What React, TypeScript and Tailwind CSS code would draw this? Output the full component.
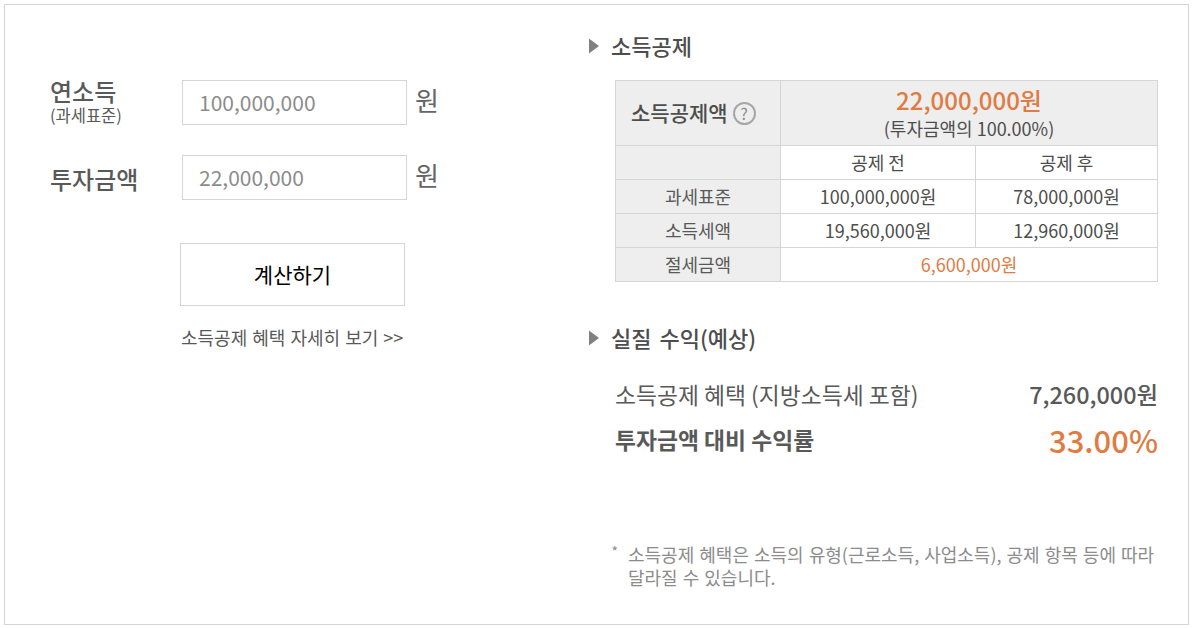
const krFont = "font-['Noto_Sans_CJK_KR',sans-serif]";

function SectionTitle({ label }: { label: string }) {
  return (
    <div className="flex items-center h-6">
      <svg width="10" height="16" viewBox="0 0 10 16" className="mr-[12px]">
        <path d="M0 0.5 L10 8 L0 15.5 Z" fill="#808080" />
      </svg>
      <h2 className="text-[22px] leading-6 -mt-[3px] font-medium text-[#4d4d4d] [word-spacing:3px]">{label}</h2>
    </div>
  );
}

function AmountField({ value }: { value: string }) {
  return (
    <div className="flex items-center">
      <div className="w-[225px] h-[45px] border border-[#d5d5d5] pl-[16px] flex items-center text-[21px] text-[#8c8c8c]">
        {value}
      </div>
      <span className="ml-[8px] -mt-[6px] text-[26px] text-[#666666]">원</span>
    </div>
  );
}

function TableRow({ label, before, after }: { label: string; before: string; after: string }) {
  return (
    <div className="flex h-[34px] border-b border-[#d5d5d5]">
      <div className="w-[165px] bg-[#eeeeee] border-r border-[#d5d5d5] flex items-center justify-center text-[#595959]">
        {label}
      </div>
      <div className="w-[195px] border-r border-[#d5d5d5] flex items-center justify-center">{before}</div>
      <div className="flex-1 flex items-center justify-center">{after}</div>
    </div>
  );
}

export default function App() {
  return (
    <div className={`${krFont} w-[1193px] h-[628px] bg-white pt-[4px] pl-[4px]`}>
      <div className="w-[1185px] h-[621px] border border-[#d5d5d5] flex">
        <div className="w-[584px] shrink-0 pl-[45px] pt-[75px]">
          <div className="flex items-center text-[#595959]">
            <div className="w-[132px] flex flex-col">
              <span className="text-[24px] leading-[24px] font-medium -mt-[2px]">연소득</span>
              <span className="text-[16.5px] leading-[20px] mt-[2px]">(과세표준)</span>
            </div>
            <AmountField value="100,000,000" />
          </div>
          <div className="flex items-center mt-[30px] text-[#595959]">
            <div className="w-[132px] text-[24px] leading-[26px] font-medium mt-[2px]">투자금액</div>
            <AmountField value="22,000,000" />
          </div>
          <button className="block mt-[43px] ml-[130px] w-[225px] h-[63px] border border-[#d5d5d5] text-[21px] text-black">
            계산하기
          </button>
          <p className="mt-[19px] ml-[131px] text-[18px] leading-6 text-[#595959] [word-spacing:1px]">소득공제 혜택 자세히 보기 &gt;&gt;</p>
        </div>

        <div className="flex-1 pt-[29px]">
          <SectionTitle label="소득공제" />
          <div className="ml-[26px] mt-[22px] w-[543px] border-x border-t border-[#d5d5d5] text-[18px] text-[#4d4d4d]">
            <div className="flex h-[65px] border-b border-[#d5d5d5] bg-[#eeeeee]">
              <div className="w-[165px] border-r border-[#d5d5d5] pl-[15px] flex items-center gap-[5px] text-[21px] font-medium">
                소득공제액
                <span className="w-[23px] h-[23px] rounded-full border-2 border-[#a6a6a6] flex items-center justify-center text-[16px] font-normal text-[#8c8c8c]">
                  ?
                </span>
              </div>
              <div className="flex-1 flex flex-col items-center justify-center">
                <span className="text-[24px] leading-[30px] -mt-[2px] font-medium text-[#e07b42]">22,000,000원</span>
                <span className="text-[18px] leading-[24px] mt-[1px]">(투자금액의 100.00%)</span>
              </div>
            </div>
            <TableRow label="" before="공제 전" after="공제 후" />
            <TableRow label="과세표준" before="100,000,000원" after="78,000,000원" />
            <TableRow label="소득세액" before="19,560,000원" after="12,960,000원" />
            <div className="flex h-[34px] border-b border-[#d5d5d5]">
              <div className="w-[165px] bg-[#eeeeee] border-r border-[#d5d5d5] flex items-center justify-center text-[#595959]">
                절세금액
              </div>
              <div className="flex-1 flex items-center justify-center text-[#dd7c45]">6,600,000원</div>
            </div>
          </div>

          <div className="mt-[44px]">
            <SectionTitle label="실질 수익(예상)" />
          </div>
          <div className="ml-[26px] mt-[30px] w-[543px] flex items-center justify-between h-[30px] text-[#595959]">
            <span className="text-[22.8px]">소득공제 혜택 (지방소득세 포함)</span>
            <span className="text-[23.4px] font-medium">7,260,000원</span>
          </div>
          <div className="ml-[26px] mt-[10px] w-[543px] flex items-center justify-between h-[40px]">
            <span className="text-[22.8px] font-bold text-[#595959]">투자금액 대비 수익률</span>
            <span className="text-[31px] font-medium text-[#e07b42]">33.00%</span>
          </div>

          <div className="ml-[9px] mt-[83px] w-[565px] flex text-[18px] leading-[23px] text-[#8c8c8c] [word-spacing:1px]">
            <span className="w-[30px] shrink-0 text-right pr-[10px] text-[14px] -mt-[3px]">*</span>
            <p className="w-[530px]">소득공제 혜택은 소득의 유형(근로소득, 사업소득), 공제 항목 등에 따라 달라질 수 있습니다.</p>
          </div>
        </div>
      </div>
    </div>
  );
}
